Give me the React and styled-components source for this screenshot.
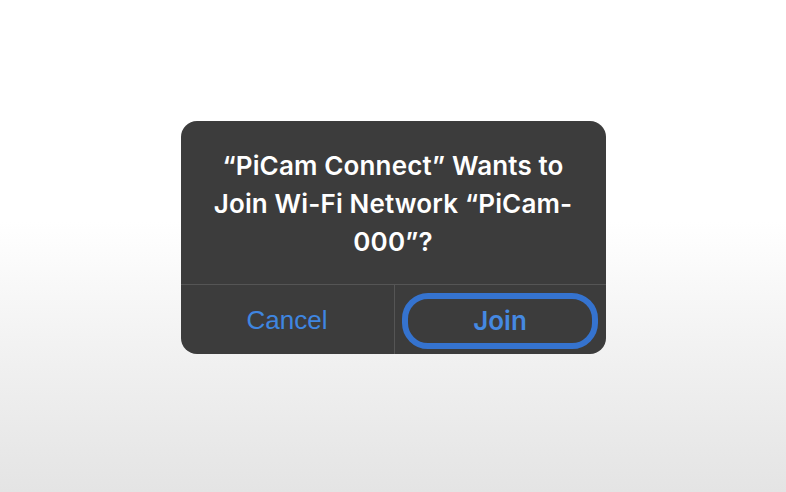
import React from 'react';
import styled, { createGlobalStyle } from 'styled-components';

const blue = '#3f86e0';
const panel = '#3c3c3c';

const GlobalStyle = createGlobalStyle`
  html, body {
    margin: 0;
    padding: 0;
  }
  body {
    min-height: 100vh;
    background: linear-gradient(180deg, #ffffff 0%, #ffffff 45%, #f2f2f2 70%, #e4e4e4 100%);
  }
`;

const Screen = styled.main`
  height: 492px;
  display: flex;
  justify-content: center;
  align-items: flex-start;
  padding-top: 121px;
  box-sizing: border-box;
`;

const Alert = styled.section`
  width: 425px;
  background: ${panel};
  border-radius: 16px;
  overflow: hidden;
  display: flex;
  flex-direction: column;
`;

const Title = styled.h2`
  margin: 0;
  padding: 26px 16px 24px;
  height: 164px;
  box-sizing: border-box;
  text-align: center;
  color: #ffffff;
  font-family: Inter, 'Noto Sans', sans-serif;
  font-weight: 600;
  font-size: 26px;
  line-height: 38px;
  letter-spacing: 0.15px;
  border-bottom: 1px solid #555555;
`;

const Actions = styled.div`
  display: grid;
  grid-template-columns: 213px 1fr;
  height: 69px;
`;

const Action = styled.button`
  border: none;
  background: transparent;
  color: ${blue};
  font-family: 'Liberation Sans', Arial, sans-serif;
  font-size: 26px;
  font-weight: 400;
  display: flex;
  align-items: center;
  justify-content: center;
  padding: 2px 0 0;
  cursor: pointer;
  & + & {
    border-left: 1px solid #555555;
  }
`;

const Focus = styled.span`
  display: flex;
  align-items: center;
  justify-content: center;
  width: 196px;
  height: 56px;
  box-sizing: border-box;
  border: 6px solid #3573cf;
  border-radius: 26px;
  font-family: Inter, 'Noto Sans', sans-serif;
  font-size: 26px;
  font-weight: 600;
  color: #4589e2;
`;

export default function App() {
  return (
    <>
      <GlobalStyle />
      <Screen>
        <Alert role="alertdialog">
          <Title>
            “PiCam Connect” Wants to Join Wi-Fi Network “PiCam-000”?
          </Title>
          <Actions>
            <Action>Cancel</Action>
            <Action>
              <Focus>Join</Focus>
            </Action>
          </Actions>
        </Alert>
      </Screen>
    </>
  );
}
